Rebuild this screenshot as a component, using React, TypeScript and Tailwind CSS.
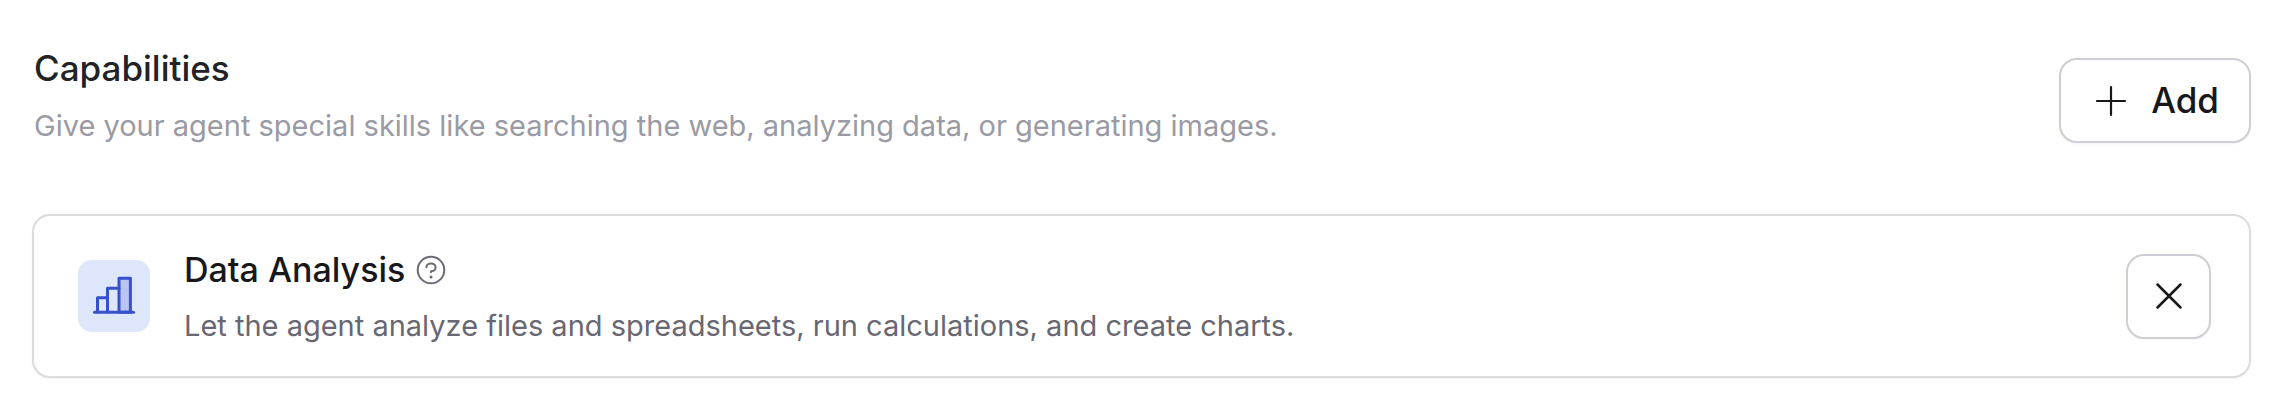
const capabilities = [
  {
    name: 'Data Analysis',
    description: 'Let the agent analyze files and spreadsheets, run calculations, and create charts.'
  }
];

function PlusIcon() {
  return (
    <svg className="size-8" viewBox="0 0 32 32" fill="none" stroke="currentColor" strokeWidth="2.2" strokeLinecap="round" aria-hidden="true">
      <path d="M16 2v28M2 16h28" />
    </svg>
  );
}

function CloseIcon() {
  return (
    <svg className="size-8" viewBox="0 0 32 32" fill="none" stroke="currentColor" strokeWidth="2.5" strokeLinecap="round" aria-hidden="true">
      <path d="M4.5 4.5l23 23M27.5 4.5l-23 23" />
    </svg>
  );
}

function HelpIcon() {
  return (
    <svg className="size-8" viewBox="0 0 32 32" fill="none" stroke="currentColor" strokeWidth="2" strokeLinecap="round" strokeLinejoin="round" aria-hidden="true">
      <circle cx="16" cy="16" r="13.3" />
      <path d="M16 18.2v-1c2.7 0 4.6-1.6 4.6-3.9S18.6 9.4 16 9.4s-4.6 1.7-4.6 3.9" />
      <circle cx="16" cy="23" r="1.5" fill="currentColor" stroke="none" />
    </svg>
  );
}

function ChartIcon() {
  return (
    <svg className="size-full" viewBox="0 0 72 72" fill="none" stroke="#3651c9" strokeWidth="3" strokeLinecap="round" strokeLinejoin="round" aria-hidden="true">
      <path d="M41 18.2h11.4v34H41z" fill="#bac5f0" />
      <path d="M19.5 52V37.8h10M29.5 52V28.2H41" />
      <path d="M16.5 52.2h39" />
    </svg>
  );
}

export default function App() {
  return (
    <section className="bg-white px-8 pt-12 pb-10 font-['Inter','Open_Sans',sans-serif]">
      <header className="flex items-end justify-between pr-[7px]">
        <div className="pl-0.5">
          <h2 className="text-[35px] leading-10 font-medium text-[#222326]">Capabilities</h2>
          <p className="mt-[18px] text-[29px] leading-10 text-[#9a9aa4]">
            Give your agent special skills like searching the web, analyzing data, or generating images.
          </p>
        </div>
        <button
          type="button"
          className="mb-[3px] flex h-[85px] shrink-0 items-center gap-6 rounded-[18px] border-2 border-[#cfced5] bg-white pr-[30px] pl-[34px] text-[35px] font-medium text-[#18181b] shadow-xs"
        >
          <PlusIcon />
          Add
        </button>
      </header>

      <ul className="mt-[68px] mr-[7px]">
        {capabilities.map((item) => (
          <li key={item.name} className="flex items-center gap-[34px] rounded-[18px] border-2 border-[#dcdcdd] bg-white py-[30px] pr-[38px] pl-11 shadow-xs">
            <div className="size-[72px] shrink-0 rounded-[14px] bg-[#dde6fa]">
              <ChartIcon />
            </div>
            <div className="min-w-0 flex-1 pt-1">
              <div className="flex items-center gap-[10px]">
                <h3 className="text-[34px] leading-10 font-medium text-[#18181b]">{item.name}</h3>
                <button type="button" aria-label="About this capability" className="text-[#6c6b75]">
                  <HelpIcon />
                </button>
              </div>
              <p className="mt-4 text-[29px] leading-10 text-[#686772]">{item.description}</p>
            </div>
            <button
              type="button"
              aria-label="Remove capability"
              className="flex size-[85px] shrink-0 items-center justify-center rounded-[18px] border-2 border-[#cfced5] bg-white text-[#18181b] shadow-xs"
            >
              <CloseIcon />
            </button>
          </li>
        ))}
      </ul>
    </section>
  );
}
